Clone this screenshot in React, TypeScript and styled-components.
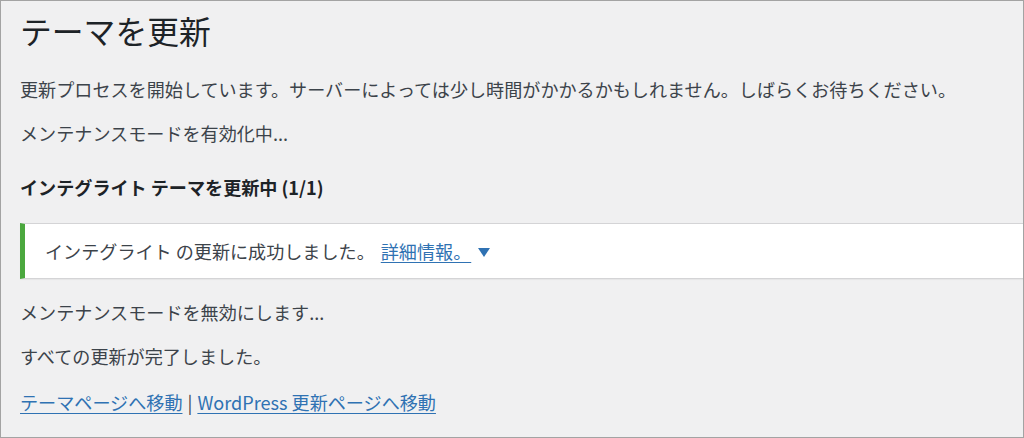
import styled, { createGlobalStyle } from "styled-components";

const GlobalStyle = createGlobalStyle`
  html, body {
    margin: 0;
    padding: 0;
    background: #f0f0f1;
  }

  body {
    font-family: "Noto Sans CJK JP", "Noto Sans", sans-serif;
  }
`;

const Frame = styled.div`
  box-sizing: border-box;
  width: 1024px;
  height: 438px;
  overflow: hidden;

  border: 1px solid #a3a3a3;
  background: #f0f0f1;

  padding: 9px 0 0 19px;
`;

const Title = styled.h1`
  margin: 0;

  font-size: 31.8px;
  font-weight: 400;
  line-height: 40px;

  color: #1d2327;
`;

const Line = styled.p<{ $top: number }>`
  margin: ${({ $top }) => $top}px 0 0;

  font-size: 18.1px;
  line-height: 27px;

  color: #3c434a;
`;

const Heading = styled.h2`
  margin: 27px 0 0;

  font-size: 18.1px;
  font-weight: 700;
  line-height: 27px;

  color: #1d2327;
`;

const Notice = styled.div`
  display: flex;
  align-items: center;

  margin: 22px 0 0;
  padding: 14px 0 13px 20px;

  background: #fff;
  border-top: 1px solid #d4d4d6;
  border-bottom: 1px solid #d4d4d6;
  border-left: 5px solid #4ba83e;
  box-shadow: 0 1px 1px rgba(0, 0, 0, 0.04);

  font-size: 18.1px;
  line-height: 27px;
  color: #3c434a;
`;

const Link = styled.a`
  color: #2f72b3;
  text-decoration: underline;
  text-underline-offset: 3px;
  cursor: pointer;
`;

const NoticeLink = styled(Link)`
  margin-left: 6px;
`;

const Caret = styled.svg`
  margin-left: 7px;
  margin-top: 2px;
`;

const Sep = styled.span`
  margin: 0 5px;
`;

export default function App() {
  return (
    <>
      <GlobalStyle />
      <Frame>
        <Title>テーマを更新</Title>

        <Line $top={26}>
          更新プロセスを開始しています。サーバーによっては少し時間がかかるかもしれません。しばらくお待ちください。
        </Line>
        <Line $top={17}>メンテナンスモードを有効化中...</Line>

        <Heading>インテグライト テーマを更新中 (1/1)</Heading>

        <Notice>
          <span>インテグライト の更新に成功しました。</span>
          <NoticeLink>詳細情報。</NoticeLink>
          <Caret width="12" height="9" viewBox="0 0 12 9">
            <path d="M0 0 L12 0 L6 9 Z" fill="#2f72b3" />
          </Caret>
        </Notice>

        <Line $top={20}>メンテナンスモードを無効にします...</Line>
        <Line $top={17}>すべての更新が完了しました。</Line>
        <Line $top={19}>
          <Link>テーマページへ移動</Link>
          <Sep>|</Sep>
          <Link>WordPress 更新ページへ移動</Link>
        </Line>
      </Frame>
    </>
  );
}
